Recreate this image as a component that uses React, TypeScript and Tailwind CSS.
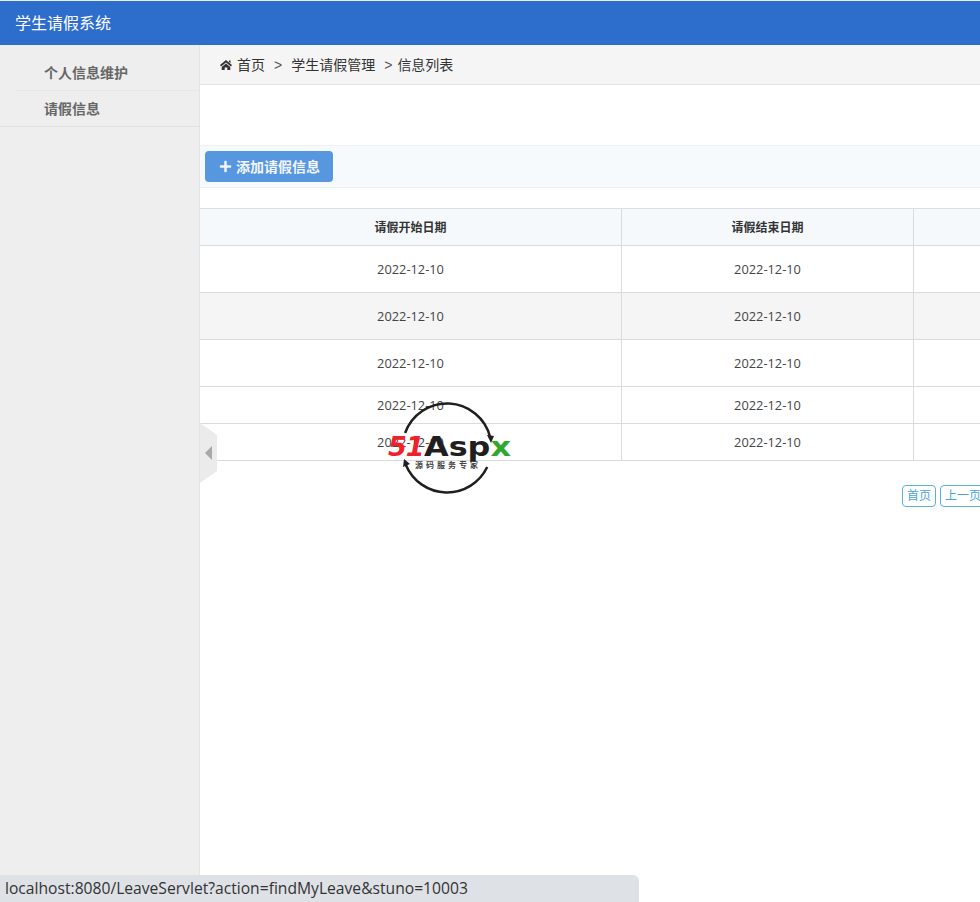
import React from "react";
import { FaPlus } from "react-icons/fa";

const fontStack = "font-['Liberation_Sans','Noto_Sans_CJK_SC',sans-serif]";

const rows = [
  { h: "h-[47px]", bg: "bg-white" },
  { h: "h-[47px]", bg: "bg-[#f5f5f5]" },
  { h: "h-[47px]", bg: "bg-white" },
  { h: "h-[37px]", bg: "bg-white" },
  { h: "h-[37px]", bg: "bg-white" },
];

const Watermark = () => (
  <div className="absolute left-[386px] top-[402px] w-[126px] h-[92px]">
    <svg width="126" height="92" viewBox="0 0 126 92" className="absolute left-0 top-0">
      <path d="M19.100 31 A44.500 44.500 0 0 1 104.100 35" fill="none" stroke="#1f1f1f" strokeWidth="2.500" />
      <path d="M19.900 63 A44.500 44.500 0 0 0 101.200 65" fill="none" stroke="#1f1f1f" strokeWidth="2.500" />
      <path d="M101 33 L108 34 L105 41 Z" fill="#1f1f1f" />
      <path d="M17 65 L24 62 L18 57 Z" fill="#1f1f1f" />
    </svg>
    <div className="absolute left-[2px] top-[31px] flex items-center h-[26px] leading-none font-['DejaVu_Sans',sans-serif] font-bold text-[27px] whitespace-nowrap">
      <span className="w-[36px] text-[#f0202c] italic tracking-[-1px]">51</span>
      <span className="inline-block origin-left scale-x-[1.18] text-[#1f1f1f]">
        Asp<span className="text-[#2fa82f]">x</span>
      </span>
    </div>
    <div className="absolute left-[29px] top-[59px] text-[8px] leading-[10px] tracking-[3px] font-bold text-[#444] whitespace-nowrap">
      源码服务专家
    </div>
  </div>
);

export default function App() {
  return (
    <div className={`relative h-[902px] w-full overflow-hidden bg-white ${fontStack}`}>
      <header className="h-[45px] bg-[#2d6dcc] border-t border-[#e8eef8] flex items-center pl-[15px] pt-[1px] text-white text-base">
        学生请假系统
      </header>

      <div className="flex h-[857px]">
        <aside className="w-[200px] shrink-0 bg-[#eeeeee] border-r border-[#e4e4e4]">
          <div className="pl-[15px]">
            <div className="h-[46px] pl-[29px] pt-[18px] border-b border-[#e6e6e6] text-sm leading-5 font-bold text-[#666]">
              个人信息维护
            </div>
          </div>
          <div className="h-[36px] pl-[44px] pt-[8px] border-b border-[#e2e2e2] text-sm leading-5 font-bold text-[#666]">
            请假信息
          </div>
        </aside>

        <main className="flex-1 min-w-0 overflow-hidden">
          <div className="h-[40px] bg-[#f5f5f5] border-b border-[#e5e5e5] flex items-center pl-[20px] text-sm text-[#333]">
            <svg width="12" height="10" viewBox="0 0 12 10" className="mr-[5px]">
              <path d="M6 0 L12 5 L11 6.400 L6 2.400 L1 6.400 L0 5 Z M9 0.500 H10.500 V3 L9 1.900 Z M6 3.400 L10.300 6.900 V10 H7.300 V7.600 H4.700 V10 H1.700 V6.900 Z" fill="#333" />
            </svg>
            <span>首页</span>
            <span className="ml-[9px] text-[#555]">&gt;</span>
            <span className="ml-[9px]">学生请假管理</span>
            <span className="ml-[9px] text-[#555]">&gt;</span>
            <span className="ml-[5px]">信息列表</span>
          </div>

          <div className="mt-[60px] h-[43px] bg-[#f6fafd] border-y border-[#eef1f4] flex items-center pl-[5px]">
            <button className="h-[31px] w-[128px] rounded-[4px] bg-[#5697df] text-[#f2f6fc] text-sm font-bold flex items-center pl-[14px]">
              <FaPlus className="text-[13px] mr-[4px]" />
              添加请假信息
            </button>
          </div>

          <div className="mt-[20px] w-[900px] border-t border-[#dcdfe3]">
            <div className="flex h-[37px] bg-[#f5f9fc] border-b border-[#d9dcdf] text-xs font-bold text-[#333] items-stretch">
              <div className="w-[421px] flex items-center justify-center pt-[1px]">请假开始日期</div>
              <div className="w-[293px] border-x border-[#d9dcdf] flex items-center justify-center pt-[1px]">请假结束日期</div>
              <div className="flex-1" />
            </div>
            {rows.map((row, index) => (
              <div key={index} className={`flex ${row.h} ${row.bg} border-b border-[#d9dcdf] text-[12.800px] text-[#444] items-stretch font-['Open_Sans',sans-serif]`}>
                <div className="w-[421px] flex items-center justify-center pt-[2px]">2022-12-10</div>
                <div className="w-[293px] border-x border-[#d9dcdf] flex items-center justify-center pt-[2px]">2022-12-10</div>
                <div className="flex-1" />
              </div>
            ))}
          </div>

          <div className="mt-[24px] ml-[702px] flex gap-[4px] w-[120px] text-xs text-[#4aa3d8]">
            <span className="w-[34px] h-[22px] shrink-0 border border-[#5bb0e0] rounded-[4px] flex items-center justify-center">首页</span>
            <span className="w-[46px] h-[22px] shrink-0 border border-[#5bb0e0] rounded-[4px] flex items-center justify-center">上一页</span>
          </div>
        </main>
      </div>

      {/* sidebar collapse handle */}
      <div className="absolute left-[200px] top-[423px] w-[17px] h-[60px] bg-[#ebebeb] [clip-path:polygon(0_0,100%_12px,100%_48px,0_100%)] flex items-center pl-[5px]">
        <div className="w-0 h-0 border-y-[7px] border-y-transparent border-r-[7px] border-r-[#a8a8a8]" />
      </div>

      <Watermark />

      {/* browser status bubble */}
      <div className="absolute left-0 bottom-0 w-[639px] h-[27px] bg-[#dee1e6] rounded-tr-[6px] pl-[5px] pt-[1px] flex items-center text-[15.650px] text-[#333] font-['Open_Sans','Liberation_Sans',sans-serif]">
        localhost:8080/LeaveServlet?action=findMyLeave&amp;stuno=10003
      </div>
    </div>
  );
}
